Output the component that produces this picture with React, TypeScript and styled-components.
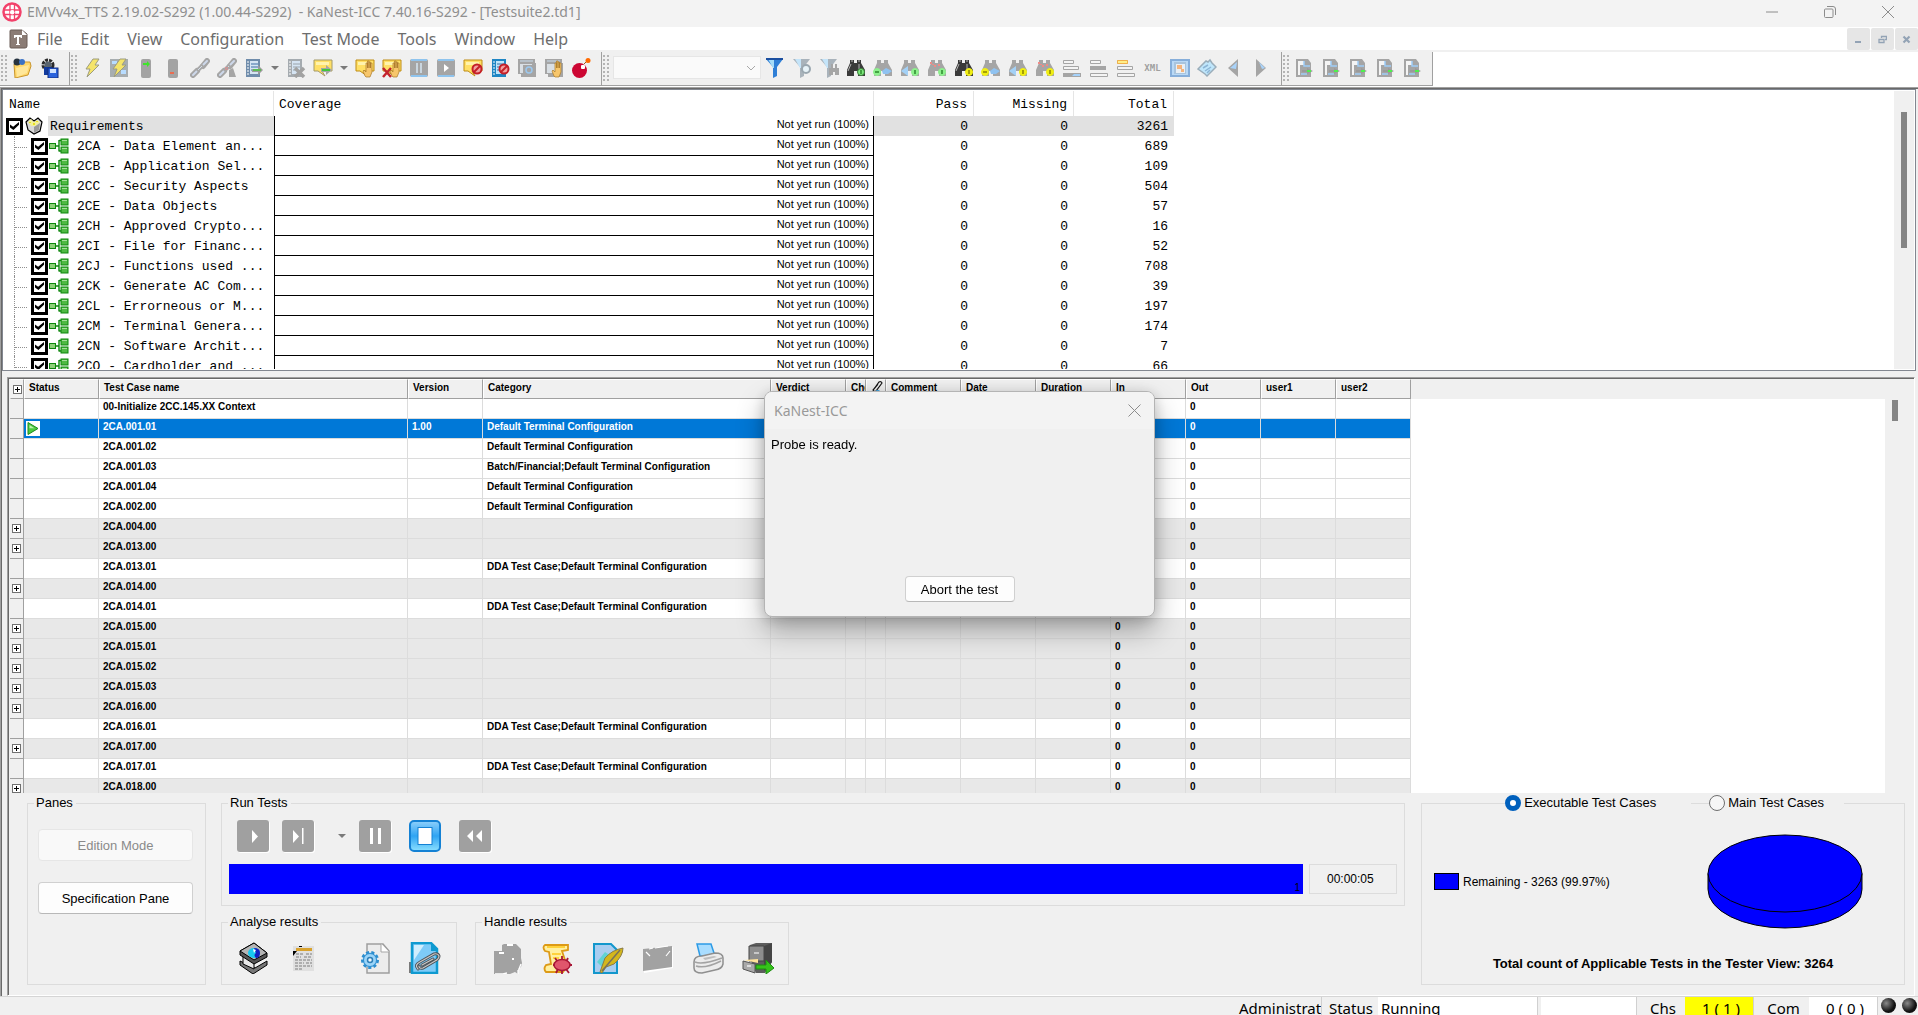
import React from "react";
import styled, { createGlobalStyle } from "styled-components";

const UI = `"Noto Sans", "Open Sans", sans-serif`;
const SANS = `"Liberation Sans", Arial, sans-serif`;
const MONO = `"Liberation Mono", "Courier New", monospace`;

const GlobalStyle = createGlobalStyle`
  * { box-sizing: border-box; }
  html, body { margin: 0; padding: 0; }
  body { background: #f0f0f0; color: #000; font-family: ${SANS}; font-size: 13px; overflow: hidden; }
  button, input, select { font: inherit; color: inherit; margin: 0; }
`;

/* ---------- window frame ---------- */
const Window = styled.div`
  display: flex;
  flex-direction: column;
  height: 100vh;
  min-height: 700px;
`;
const TitleBar = styled.header`
  display: flex;
  align-items: center;
  height: 27px;
  background: #f3f3f3;
  color: #8f8f8f;
  font: 14px/24px ${UI};
  padding: 0 1px 3px 2px;
  gap: 5px;
`;
const Title = styled.h1`
  flex: 1;
  margin: 0;
  font: inherit;
  white-space: pre;
`;
const CaptionButtons = styled.div`
  display: flex;
`;
const CaptionButton = styled.button`
  display: grid;
  place-items: center;
  width: 58px;
  height: 24px;
  padding: 0;
  border: 0;
  background: none;
`;
const MenuBar = styled.nav`
  display: flex;
  align-items: center;
  height: 25px;
  background: #fff;
  border-bottom: 2px solid #f0f0f0;
  padding-left: 9px;
`;
const MenuList = styled.div`
  display: flex;
  flex: 1;
`;
const MenuItem = styled.button`
  border: 0;
  background: none;
  padding: 0 9px;
  color: #6d6d6d;
  font: 16px/22px ${UI};
`;
const MdiButton = styled.button`
  display: grid;
  place-items: center;
  width: 23px;
  height: 22px;
  margin-left: 1px;
  padding: 2px 0 0;
  border: 0;
  border-radius: 2px;
  background: #e6e6e6;
`;

/* ---------- toolbars ---------- */
const ToolbarRow = styled.div`
  display: flex;
  height: 35px;
  background: #fff;
`;
const Toolbar = styled.div`
  display: flex;
  align-items: center;
  height: 34px;
  background: #f0f0f0;
  border-bottom: 1px solid #a0a0a0;
  border-right: 1px solid #a0a0a0;
  padding: 0 7px 2px 0;
`;
const Grip = styled.span`
  width: 8px;
  height: 28px;
  background-image: radial-gradient(circle, #b4b4b4 1px, transparent 1px);
  background-size: 4px 4px;
`;
const ToolButton = styled.button`
  display: grid;
  place-items: center;
  width: 27px;
  height: 28px;
  padding: 0;
  border: 0;
  background: none;
  font: bold 9px/12px "DejaVu Sans Mono", monospace;
  color: #a0a0a0;
`;
const DropArrow = styled.button`
  width: 15px;
  height: 28px;
  padding: 0;
  border: 0;
  background: none;
  display: grid;
  place-items: center;
`;
const FilterSelect = styled.select`
  appearance: none;
  width: 148px;
  height: 23px;
  border: 1px solid #e6e6e6;
  background: #fafafa;
  opacity: 1;
`;
const SelectWrap = styled.span`
  display: grid;
  align-items: center;
  margin-left: 3px;
  & > * { grid-area: 1 / 1; }
  & > svg { justify-self: end; margin-right: 4px; pointer-events: none; }
`;

/* ---------- requirements pane ---------- */
const Workspace = styled.main`
  flex: 1;
  min-height: 0;
  display: flex;
  flex-direction: column;
  border-top: 1px solid #a0a0a0;
  border-left: 1px solid #a0a0a0;
`;
const WorkspaceInner = styled.div`
  flex: 1;
  min-height: 0;
  display: flex;
  flex-direction: column;
  border-top: 1px solid #696969;
  border-left: 1px solid #696969;
`;
const RequirementsPane = styled.section`
  display: flex;
  flex: 0 0 282px;
  min-height: 0;
  margin-right: 2px;
  border: 1px solid #828790;
  background: #fff;
  padding: 1px;
`;
const ScrollClip = styled.div`
  flex: 1;
  min-width: 0;
  min-height: 0;
  overflow: hidden;
`;
const ScrollTrack = styled.div<{ $w: number }>`
  flex: none;
  width: ${(p) => p.$w}px;
  background: #f0f0f0;
  padding: 21px 0 0 7px;
`;
const ScrollThumb = styled.div<{ $h: number }>`
  width: 6px;
  height: ${(p) => p.$h}px;
  background: #858585;
`;
const ReqTable = styled.table`
  table-layout: fixed;
  width: 1170px;
  border-collapse: separate;
  border-spacing: 0;
  font: 13px/18px ${MONO};
`;
const ReqTh = styled.th<{ $right?: boolean }>`
  height: 25px;
  padding: 2px 6px 0 5px;
  font-weight: normal;
  text-align: ${(p) => (p.$right ? "right" : "left")};
  border-right: 1px solid #e5e5e5;
`;
const NameCell = styled.td`
  height: 20px;
  padding: 0;
`;
const NameFlex = styled.label<{ $root?: boolean }>`
  display: flex;
  align-items: center;
  height: 20px;
  white-space: pre;
  padding-left: ${(p) => (p.$root ? 2 : 10)}px;
`;
const NameText = styled.span<{ $root?: boolean }>`
  flex: 1;
  overflow: hidden;
  margin-left: ${(p) => (p.$root ? 4 : 6)}px;
  padding: 2px 0 0 2px;
  background: ${(p) => (p.$root ? "#e1e1e1" : "transparent")};
`;
const Branch = styled.span`
  align-self: stretch;
  width: 17px;
  border-left: 1px dotted #909090;
  &::before {
    content: "";
    display: block;
    width: 12px;
    height: 11px;
    border-bottom: 1px dotted #909090;
  }
`;
const TreeCheck = styled.input`
  appearance: none;
  display: grid;
  place-items: center;
  width: 17px;
  height: 17px;
  margin: 0 1px 0 0;
  border: 3px solid #000;
  background: #fff;
  &:checked::before {
    content: "";
    width: 9px;
    height: 8px;
    background: #000;
    clip-path: polygon(0 30%, 35% 58%, 100% 0, 100% 35%, 38% 100%, 0 70%);
  }
`;
const CoverageCell = styled.td`
  padding: 0 4px 3px 0;
  border-left: 1px solid #000;
  border-right: 1px solid #000;
  border-bottom: 1px solid #000;
  text-align: right;
  font: 11px/16px ${SANS};
`;
const NumCell = styled.td<{ $root?: boolean }>`
  padding: 2px 6px 0 0;
  text-align: right;
  background: ${(p) => (p.$root ? "#e1e1e1" : "transparent")};
`;

/* ---------- test-case grid ---------- */
const TestPane = styled.section`
  flex: 1;
  min-height: 0;
  display: flex;
  flex-direction: column;
  margin: 6px 3px 0 5px;
  border: 1px solid #a0a0a0;
  border-right-color: #fff;
  border-bottom-color: #fff;
`;
const TestPaneInner = styled.div`
  flex: 1;
  min-height: 0;
  display: flex;
  flex-direction: column;
  border-top: 1px solid #696969;
  border-left: 1px solid #696969;
`;
const GridArea = styled.div`
  flex: 1;
  min-height: 0;
  display: flex;
  padding-left: 1px;
`;
const GridTable = styled.table`
  table-layout: fixed;
  width: 100%;
  border-collapse: separate;
  border-spacing: 0;
  background: #fff;
  font: bold 10px/16px ${SANS};
`;
const GridTh = styled.th`
  height: 20px;
  padding: 0 0 1px 4px;
  overflow: hidden;
  white-space: nowrap;
  vertical-align: top;
  text-align: left;
  background: #f0f0f0;
  border: 1px solid #a0a0a0;
  border-top-color: #fff;
  border-left-color: #fff;
  & > svg { display: block; }
`;
const FillerTh = styled.th`
  background: #f0f0f0;
`;
const ExpandCell = styled.td`
  height: 20px;
  padding: 0;
  background: #f0f0f0;
  border-right: 1px solid #a0a0a0;
  border-bottom: 1px solid #a0a0a0;
`;
const ExpandButton = styled.button`
  display: grid;
  place-items: center;
  width: 9px;
  height: 9px;
  margin: 0 auto;
  padding: 0;
  border: 1px solid #707070;
  background: #fff;
`;
const HeadExpand = styled(GridTh)`
  padding: 0;
  vertical-align: middle;
  border-left-color: #f0f0f0;
`;
const Td = styled.td<{ $tone: Tone }>`
  height: 20px;
  padding: 0 0 0 4px;
  vertical-align: top;
  white-space: nowrap;
  overflow: hidden;
  border-right: 1px solid #dcdcdc;
  border-bottom: 1px solid #dcdcdc;
  background: ${(p) => (p.$tone === "sel" ? "#0078d7" : p.$tone === "gray" ? "#e8e8e8" : "#fff")};
  color: ${(p) => (p.$tone === "sel" ? "#fff" : "#000")};
`;
const StatusIcon = styled.span`
  display: block;
  width: 14px;
  height: 15px;
  margin: 2px 0 0 -2px;
  background: #fff;
`;

/* ---------- bottom panels ---------- */
const Controls = styled.div`
  display: flex;
  gap: 15px;
  padding: 2px 9px 10px 18px;
`;
const Center = styled.div`
  flex: 1;
  display: flex;
  flex-direction: column;
  gap: 8px;
  margin-right: 1px;
`;
const GroupRow = styled.div`
  display: flex;
  gap: 18px;
`;
const Group = styled.fieldset<{ $w?: number }>`
  margin: 0;
  min-width: 0;
  border: 1px solid #dcdcdc;
  width: ${(p) => (p.$w ? `${p.$w}px` : "auto")};
  padding: 0;
`;
const GroupBody = styled.div<{ $pad: string }>`
  padding: ${(p) => p.$pad};
`;
const Legend = styled.legend`
  margin-left: 6px;
  padding: 0 3px 0 2px;
  line-height: 16px;
`;
const PaneButtons = styled.div`
  display: grid;
  gap: 21px;
`;
const PushButton = styled.button`
  height: 32px;
  border: 1px solid #d0d0d0;
  border-bottom-color: #b8b8b8;
  border-radius: 4px;
  background: #fdfdfd;
  padding: 0 12px;
  &:disabled { background: #f9f9f9; color: #8a8a8a; border-color: #e6e6e6; }
`;
const Transport = styled.div`
  display: flex;
  align-items: center;
  gap: 10px;
  padding-left: 8px;
`;
const Cluster = styled.div<{ $gap: number }>`
  display: flex;
  align-items: center;
  gap: ${(p) => p.$gap}px;
`;
const PlainIconButton = styled.button`
  display: grid;
  place-items: center;
  width: 32px;
  height: 32px;
  padding: 0;
  border: 0;
  background: none;
`;
const ProgressRow = styled.div`
  display: flex;
  gap: 6px;
  margin-top: 12px;
`;
const Progress = styled.div`
  flex: 1;
  height: 30px;
  background: #00f;
  text-align: right;
  font-size: 10px;
  line-height: 12px;
  padding: 18px 3px 0 0;
`;
const Timer = styled.output`
  width: 88px;
  height: 30px;
  border: 1px solid #dcdcdc;
  font-size: 12px;
  line-height: 28px;
  padding-left: 17px;
`;
const IconStrip = styled.div`
  display: flex;
  gap: 18px;
`;
const IconGap = styled.span`
  width: 3px;
`;
const ModeLegend = styled.legend`
  display: flex;
  align-items: center;
  margin-left: auto;
  margin-right: 60px;
  padding: 0;
  line-height: 16px;
`;
const ModeRule = styled.span`
  width: 18px;
  height: 1px;
  background: #dcdcdc;
`;
const ModeLabel = styled.label<{ $pad: number }>`
  display: flex;
  align-items: center;
  gap: 3px;
  padding-right: ${(p) => p.$pad}px;
`;
const Radio = styled.input`
  appearance: none;
  width: 16px;
  height: 16px;
  border: 1px solid #6e6e6e;
  border-radius: 50%;
  background: #f6f6f6;
  &:checked { border: 5px solid #0060bd; background: #fff; }
`;
const ChartRow = styled.div`
  display: flex;
  align-items: center;
  justify-content: space-between;
  padding: 0 41px 0 12px;
  font-size: 12px;
`;
const LegendEntry = styled.span`
  display: flex;
  align-items: center;
  gap: 4px;
`;
const Swatch = styled.span`
  width: 25px;
  height: 17px;
  background: #00f;
  border: 1px solid #000;
`;
const TotalLine = styled.p`
  margin: 26px 0 0;
  text-align: center;
  font: bold 13px/18px ${SANS};
`;

/* ---------- status bar ---------- */
const StatusBar = styled.footer`
  display: flex;
  justify-content: flex-end;
  height: 19px;
  overflow: hidden;
  border-top: 1px solid #d5d5d5;
  padding: 0 1px 0 0;
  font: 15px/22px ${UI};
`;
const StatusCell = styled.span<{ $w: number; $bg?: string; $sep?: boolean; $center?: boolean }>`
  flex: none;
  width: ${(p) => p.$w}px;
  overflow: hidden;
  white-space: pre;
  padding-left: ${(p) => (p.$center ? 4 : 3)}px;
  text-align: ${(p) => (p.$center ? "center" : "left")};
  background: ${(p) => p.$bg ?? "transparent"};
  border-right: ${(p) => (p.$sep ? "1px solid #d0d0d0" : "0")};
`;
const Lamps = styled.span`
  display: flex;
  gap: 6px;
  padding: 1px 0 0 3px;
`;
const Lamp = styled.span`
  width: 15px;
  height: 15px;
  border-radius: 50%;
  background: radial-gradient(circle at 35% 35%, #8a8a8a, #111 60%);
`;

/* ---------- dialog ---------- */
const Overlay = styled.div`
  position: fixed;
  inset: 0;
  display: grid;
  place-items: center;
  padding: 0 0 7px 1px;
  pointer-events: none;
`;
const Dialog = styled.div`
  display: flex;
  flex-direction: column;
  width: 391px;
  height: 226px;
  border: 1px solid #b4b4b4;
  border-radius: 8px;
  background: #f0f0f0;
  overflow: hidden;
  box-shadow: 0 14px 28px rgba(0, 0, 0, 0.3), 0 2px 14px rgba(0, 0, 0, 0.16);
  pointer-events: auto;
`;
const DialogTitle = styled.div`
  display: flex;
  align-items: center;
  justify-content: space-between;
  height: 37px;
  background: #f3f3f3;
  color: #999;
  font: 14px/20px ${UI};
  padding: 0 5px 0 9px;
`;
const DialogClose = styled(CaptionButton)`
  width: 30px;
`;
const DialogText = styled.p`
  flex: 1;
  margin: 0;
  padding: 7px 6px;
  line-height: 18px;
`;
const DialogActions = styled.div`
  display: flex;
  justify-content: center;
  padding-bottom: 14px;
`;
const AbortButton = styled(PushButton)`
  width: 110px;
  height: 26px;
  padding: 0;
`;

/* ---------- icons ---------- */
type Kids = { children?: React.ReactNode };
const Svg = ({ s = 20, w, h, box, children }: Kids & { s?: number; w?: number; h?: number; box?: string }) => (
  <svg width={w ?? s} height={h ?? s} viewBox={box ?? `0 0 ${w ?? s} ${h ?? s}`} fill="none" aria-hidden="true">
    {children}
  </svg>
);
const G = "#a5a5a5";

const FolderIcon = () => (
  <Svg>
    <path d="M2 6h6l2-2h8l1 4-3 9-13 3z" fill="#ffd76a" stroke="#c9962e" />
    <path d="M4 10l13-3-2 8-10 4z" fill="#ffe79a" />
    <circle cx="5" cy="4" r="3.5" fill="#26333f" />
    <circle cx="10" cy="4" r="3" fill="#3b72c4" />
  </Svg>
);
const GearSaveIcon = () => (
  <Svg>
    <circle cx="9" cy="7" r="5" stroke="#2a2a2a" strokeWidth="3" strokeDasharray="3 1" />
    <circle cx="9" cy="7" r="3.5" fill="#59646e" />
    <rect x="5" y="9" width="8" height="8" fill="#123a9c" />
    <rect x="9" y="10" width="10" height="10" fill="#2b63dd" stroke="#102c80" />
    <rect x="11" y="11" width="6" height="4" fill="#cfe2ff" />
  </Svg>
);
const BoltIcon = ({ framed }: { framed?: boolean }) => (
  <Svg>
    {framed && <path d="M1 1h18v18H1z" fill="#a7adb0" />}
    {framed && <path d="M3 3h5v3H3zM12 12h5v4h-5z" fill="#b8dcff" />}
    <path d="M11 1h6l-4 6h4L5 19l3-8H4z" fill="#f5e469" stroke="#9c9c80" />
  </Svg>
);
const ProbeIcon = ({ on }: { on?: boolean }) => (
  <Svg>
    <rect x="5" y="1" width="10" height="19" rx="2" fill="#a3a3a3" />
    {on ? <path d="M7 5h4V3l3 3-3 3V7H7z" fill="#3fe52a" /> : <path d="M7 15h4" stroke="#ff5a36" strokeWidth="1.500" />}
  </Svg>
);
const LinkIcon = ({ bad }: { bad?: boolean }) => (
  <Svg>
    <path d="M3 17l4-4M13 8l4-5" stroke="#a5a5a5" strokeWidth="6" strokeLinecap="round" />
    <path d="M3 17l4-4M13 7l4-4" stroke="#cdd8ea" strokeWidth="2" strokeLinecap="round" />
    <path d="M7 13l6-6" stroke="#a8a8a8" strokeWidth="4" />
    <path d="M8 12l4-4" stroke="#d3ddea" />
    {bad && <path d="M8 9l3 3m0-3l-3 3" stroke="#e88a8c" />}
    {bad && <path d="M12 12l4-2 3 9h-7z" fill="#a5a5a5" />}
  </Svg>
);
const NotebookIcon = ({ kind }: { kind: "run" | "off" | "stop" }) => (
  <Svg>
    <rect x="2" y="1" width="14" height="18" fill={kind === "off" ? "#a5abb0" : kind === "stop" ? "#1f86c4" : "#6f8cab"} />
    <path d="M6 3h8v13H6z" fill={kind === "stop" ? "#bfe6fb" : "#d5e4f3"} />
    <path d="M3 4h2M3 7h2M3 10h2M3 13h2M3 16h2" stroke="#fff" />
    <path d="M7 6h7M7 9h7M7 12h5" stroke={kind === "off" ? "#9aa3aa" : "#3d6fa3"} />
    {kind === "run" && <path d="M8 11h6V7l5 5-5 5v-3H8z" fill="#9b9b9b" />}
    {kind === "run" && <path d="M9 12h8" stroke="#45c93c" strokeWidth="1.500" />}
    {kind === "off" && <path d="M9 10l9 9m0-9l-9 9" stroke="#a2a2a2" strokeWidth="3.500" />}
    {kind === "stop" && <Forbid />}
  </Svg>
);
const Forbid = () => (
  <g>
    <circle cx="14" cy="11" r="4.5" fill="#f3a0a0" stroke="#c41f28" strokeWidth="2" />
    <path d="M11 14l6-6" stroke="#c41f28" strokeWidth="2" />
  </g>
);
const Hand = () => (
  <path d="M10 18l-2-5 1-1 2 2V5h1.500v5V3H14v7V4h1.500v6V5H17v9l-2 5h-4z" fill="#f7c66b" stroke="#a8782a" strokeWidth=".7" />
);
const NoteIcon = ({ kind }: { kind: "go" | "hand" | "delhand" | "stop" }) => (
  <Svg>
    <path d="M1 2h18v11H9l3 5-7-5H1z" fill="#ffe066" stroke={kind === "go" ? "#a49a68" : "#bf8c14"} />
    <path d="M3 4h13v3H3z" fill="#fff3ad" />
    {kind === "go" && <path d="M8 10h5V7l6 5-6 5v-3H8z" fill="#a5a5a5" />}
    {kind === "go" && <path d="M9 12h8" stroke="#3fc83a" strokeWidth="2" />}
    {(kind === "hand" || kind === "delhand") && <Hand />}
    {kind === "delhand" && <path d="M1 10l8 9M9 10l-8 9" stroke="#c3232d" strokeWidth="2.500" />}
    {kind === "stop" && <Forbid />}
  </Svg>
);
const BlueKeyIcon = ({ kind }: { kind: "pause" | "play" }) => (
  <Svg>
    <rect x="1" y="1" width="18" height="18" rx="2" fill="#a5a5a5" />
    <path d="M2 2h16M2 18h16" stroke="#8fc4ee" strokeWidth="2" />
    {kind === "pause" ? <path d="M8 5v10M12 5v10" stroke="#d6e6f2" strokeWidth="1.500" /> : <path d="M8 6l5 4-5 4z" fill="#fff" />}
  </Svg>
);
const WindowIcon = ({ hand }: { hand?: boolean }) => (
  <Svg>
    <path d="M1 1h17v4h1v14H4v-3H1z" fill="#a5a5a5" />
    <path d="M3 6h12v9H3z" fill="#d9dfe4" />
    <path d="M3 3h13" stroke="#c9dcec" />
    {hand ? (
      <Hand />
    ) : (
      <g>
        <path d="M6 7h13v12H6z" fill="#a5a5a5" />
        <circle cx="12" cy="12" r="3" stroke="#9cc8ee" strokeWidth="1.500" />
      </g>
    )}
  </Svg>
);
const BombIcon = () => (
  <Svg>
    <path d="M13 6l4-4" stroke="#9c5a1c" />
    <circle cx="17" cy="2.500" r="2.500" fill="#ff6a00" />
    <ellipse cx="8.500" cy="12.500" rx="7.500" ry="7.500" fill="#cc0633" />
    <rect x="10" y="7" width="4" height="4" rx="1" fill="#fff" />
  </Svg>
);
const FunnelIcon = ({ kind }: { kind: "on" | "clock" | "find" }) => {
  const on = kind === "on";
  return (
    <Svg>
      <path d="M1 1h17L12 9v9l-4 2V9z" fill={on ? "#2f7fd6" : "#a9b3bb"} />
      <path d="M3 1h6v9l-1 0z" fill={on ? "#a5dcf8" : "#c4e4f9"} />
      {on && <path d="M1 1h17" stroke="#1b4fa0" strokeWidth="2" />}
      {kind === "clock" && <circle cx="14" cy="11" r="4" fill="#e6f2f8" stroke="#9aa7b0" strokeWidth="2" />}
      {kind === "find" && <path d="M10 10h2V6h2v4h2V6h2v4h2v7h-4v-3h-2v3h-4z" fill="#a5a5a5" />}
    </Svg>
  );
};
type BinoKind = "find" | "next" | "prev" | "mark";
const BinocularIcon = ({ kind, hue }: { kind: BinoKind; hue: "green" | "yellow" }) => {
  const body = kind === "find" ? "#3a3a3a" : G;
  const c = hue === "green" ? (kind === "find" ? "#7be87b" : "#8df08d") : "#f0ee14";
  const cx = kind === "next" ? 4 : 15;
  return (
    <Svg>
      <path d="M4 2h4v3h3V2h4v3l4 7v6h-7v-5H8v5H1v-6l3-7z" fill={body} />
      {kind === "find" && <path d="M5 6l-3 7M13 6v5M5 3h2M12 3h2" stroke="#b5b5b5" />}
      {kind === "next" && <path d="M9 13l4-3 6 3-4 3h-5z" fill="#8fc2f0" />}
      {kind === "prev" && <path d="M1 13l7-5v10z" fill="#a3d1f7" />}
      {kind === "mark" && <path d="M3 4h2v2H3zM7 7h2v2H7zM5 6h2v1H5zM11 6h2v2h-2z" fill="#f08a86" />}
      <circle cx={cx} cy="14" r="3.500" fill={c} stroke={kind === "find" && hue === "green" ? "#3a7a3a" : c} />
      <path d={kind === "next" ? "M2 14h4" : "M15 12v4"} stroke={hue === "green" ? "#2c8a2c" : "#8b8400"} strokeWidth="1.500" />
    </Svg>
  );
};
const BarsIcon = ({ hot }: { hot: number }) => (
  <Svg>
    <path d="M1.500 2.500h10v3h-10zM1.500 8.500h15v3h-15zM1.500 15.500h17v3h-17z" fill="#f4f4f4" stroke={G} />
    {hot === 0 && <path d="M1.500 2.500h10v3h-10z" fill="#ffef8a" stroke="#f0b04a" />}
    {hot === 1 && <path d="M1 8h16v4H1z" fill={G} />}
    {hot === 2 && <path d="M1 15h18v4H1z" fill={G} />}
    {hot === 2 && <path d="M12 16h6v2h-8z" fill="#a5d2fb" />}
  </Svg>
);
const FrameIcon = () => (
  <Svg>
    <rect x="1" y="2" width="18" height="16" fill="#b9d9f6" stroke="#86aeda" strokeWidth="2" />
    <rect x="4" y="4" width="12" height="12" fill="#a9c4dd" />
    <rect x="6" y="6" width="9" height="9" fill="#e9eff5" />
    <path d="M7 7h5v4H7z" fill="#f4b57e" />
    <path d="M11 11h3v3h-3z" fill="#f4b57e" />
  </Svg>
);
const TagIcon = () => (
  <Svg>
    <path d="M1 11l8-8 2 1 2-2 2 3 4 4-9 9-2-2z" fill="#bfe6fb" stroke="#9aadba" strokeWidth="1.500" />
    <path d="M6 10l5-3M8 13l6-4M10 15l3-3" stroke="#8cb5d6" strokeWidth="1.500" />
  </Svg>
);
const TriangleIcon = ({ right }: { right?: boolean }) => (
  <Svg>
    {right ? (
      <g>
        <path d="M5 1l10 9L5 19z" fill={G} />
        <path d="M8 4l6 6-3 1z" fill="#a9d3fa" />
      </g>
    ) : (
      <g>
        <path d="M14 1L4 10l10 9z" fill={G} />
        <path d="M13 4l-7 6 6 1z" fill="#a9d3fa" />
      </g>
    )}
  </Svg>
);
const ReportIcon = () => (
  <Svg>
    <path d="M2 1h12l3 4v14H2z" fill="#a5a5a5" />
    <path d="M4 3v14h2V7h4V3z" fill="#f4f4f4" />
    <path d="M10 3v5h6M7 16h6" stroke="#9fcdf7" strokeWidth="1.500" />
    <path d="M8 12h5v-2l6 3-6 3v-2H8z" fill="#9a9a9a" />
    <path d="M13 13h4" stroke="#4df04d" strokeWidth="2" />
  </Svg>
);
const ArrowDown = () => (
  <Svg w={10} h={6}>
    <path d="M1 1h8L5 5z" fill="#7a7a7a" />
  </Svg>
);
const LogoIcon = () => (
  <Svg s={20}>
    <circle cx="10" cy="10" r="8.500" fill="#fff" stroke="#f2416a" strokeWidth="2.500" />
    <path d="M8 2v16M12.500 2v16M2 8h16M2 12.500h16" stroke="#f2416a" strokeWidth="1.300" />
    <circle cx="10.250" cy="10.250" r="2.200" fill="#fff" />
  </Svg>
);
const DocTIcon = () => (
  <Svg w={19} h={20}>
    <path d="M2 1h11l5 4v12q0 2-2 2H2q-1 0-1-1V2q0-1 1-1z" fill="#8b7c75" stroke="#6b5d57" />
    <path d="M13 1l5 5h-5z" fill="#fff" />
    <path d="M5 6h8v3h-1l-1-1h-1v7h1v1H7v-1h1V8H7L6 9H5z" fill="#fff" />
  </Svg>
);
const RootIcon = () => (
  <Svg>
    <path d="M2 6l4-4 4 3 4-3 4 4-2 9-6 3-6-4z" fill="#d8d8d8" stroke="#000" strokeWidth="1.200" />
    <path d="M4 6l3-3 3 3 3-2 3 2-4 4H7z" fill="#f1ef9a" />
    <path d="M5 6h2v1H5zM9 7h2v2H9zM12 5h2v1h-2z" fill="#e8e020" />
    <path d="M10 11l6-4-1 7-5 3z" fill="#9a9a9a" />
  </Svg>
);
const NodeIcon = () => (
  <Svg w={20} h={16}>
    <path d="M6 8h4M10 2.500h3M10 13h3M10 2v11.500" stroke="#0b870b" strokeWidth="1.400" />
    <rect x="0.500" y="5.500" width="6" height="5" fill="#8fd07a" stroke="#0b870b" />
    <rect x="12" y="1" width="7" height="6" fill="#4fb944" stroke="#0b870b" />
    <rect x="12" y="9" width="7" height="6" fill="#4fb944" stroke="#0b870b" />
    <path d="M13 2.500h5M13 10.500h5" stroke="#a5dd9b" />
  </Svg>
);
const PlusIcon = () => (
  <Svg s={7}>
    <path d="M1 3.500h5M3.500 1v5" stroke="#000" />
  </Svg>
);
const ClipHeadIcon = () => (
  <Svg w={13} h={14}>
    <path d="M3 9l5-7q2-1 3 1l-6 8q-2 1-3-1l5-6" stroke="#111" strokeWidth="1.200" />
    <path d="M5 10h4l-3 3z" fill="#48a7e0" />
  </Svg>
);
const PlayGreen = () => (
  <Svg w={14} h={15}>
    <path d="M2 1.500L12 7.500 2 13.500z" fill="#4ccb3f" stroke="#1d8a1d" />
    <path d="M3.500 4l5 3.200-5 0z" fill="#bdf0ae" />
  </Svg>
);
const KeyIcon = ({ kind }: { kind: "play" | "step" | "pause" | "back" }) => (
  <Svg s={33} w={33} h={33}>
    <rect x="1" y="1" width="32" height="32" rx="3" fill="#fff" />
    <rect x="0" y="0" width="32" height="32" rx="3" fill="#a0a0a0" />
    {kind === "play" && <path d="M15 10l6 6.500-6 6.500z" fill="#fff" />}
    {kind === "step" && <path d="M11 10l6 6.500-6 6.500zM20 8h1.500v16H20z" fill="#fff" />}
    {kind === "pause" && <path d="M11 8h3v16h-3zM19 8h3v16h-3z" fill="#fff" />}
    {kind === "back" && <path d="M14 10l-6 6 6 6zM23 10l-6 6 6 6z" fill="#fff" />}
  </Svg>
);
const StopIcon = () => (
  <Svg s={32}>
    <defs>
      <linearGradient id="stopFill" x1="0" y1="0" x2="0" y2="1">
        <stop offset="0" stopColor="#8fd0fb" />
        <stop offset=".5" stopColor="#2fa4f3" />
        <stop offset="1" stopColor="#8be0ff" />
      </linearGradient>
    </defs>
    <rect x="1" y="1" width="30" height="30" rx="4" fill="url(#stopFill)" stroke="#1481d4" strokeWidth="2" />
    <rect x="9" y="7.500" width="14" height="17" fill="#fff" stroke="#1481d4" />
  </Svg>
);
const AnalyseIcon = () => (
  <Svg s={32}>
    <path d="M2 19l15 7 12-7v4l-14 9L2 23z" fill="#777" stroke="#000" />
    <path d="M5 12v10l11 5V15z" fill="#e9e9e9" stroke="#000" />
    <path d="M2 9L16 1l13 10v4l-13 7L2 13z" fill="#555" stroke="#000" />
    <path d="M2 9L16 1l13 10-13 7z" fill="#b5b5b5" stroke="#000" />
    <ellipse cx="16" cy="11" rx="6" ry="5" fill="#18c8f0" />
    <path d="M16 6q6 0 6 5t-4 5q-3-3 0-5z" fill="#1420c0" />
    <path d="M15 7l3 1-2 3z" fill="#fff" />
  </Svg>
);
const LogIcon = () => (
  <Svg s={32}>
    <path d="M5 4h21v25H5z" fill="#e0e0e0" />
    <path d="M8 6h16v3H8z" fill="#d8a22e" />
    <path d="M5 9h4l-4 5z" fill="#000" />
    <path d="M11 4h3v1h-3z" fill="#000" />
    <path d="M8 12h7M18 12h6M8 15h5M16 15h8M7 18h17M7 21h9M18 21h6M7 24h17M7 27h8" stroke="#7c7c7c" strokeDasharray="3 1" />
  </Svg>
);
const SettingsDocIcon = () => (
  <Svg s={32}>
    <path d="M8 2h16l6 7v22H8z" fill="#ececec" stroke="#9e9e9e" strokeWidth="1.500" />
    <path d="M22 2v8h8" fill="#fff" stroke="#a5a5a5" />
    <circle cx="11" cy="18" r="7.500" fill="#8ccaf4" stroke="#2d8ecf" strokeWidth="3" strokeDasharray="3 2.200" />
    <circle cx="11" cy="18" r="6.500" fill="#9bd4f8" stroke="#2d8ecf" />
    <circle cx="11" cy="18" r="2.500" fill="#eef7fd" stroke="#2d7fb8" strokeWidth="1.500" />
  </Svg>
);
const AttachIcon = () => (
  <Svg s={32}>
    <path d="M0 20h4v11H0z" fill="#7a7a7a" />
    <path d="M3 1h19l6 6v24H3z" fill="#7ecbf8" stroke="#0f9ad0" strokeWidth="2.500" />
    <path d="M22 1v8h7z" fill="#0f9ad0" />
    <path d="M5 3h10L5 18z" fill="#d0eefd" />
    <path d="M13 23l11-6M9 27q-4-4 2-7l14-8q4-1 5 2 0 3-4 5l-12 7q-4 1-4-2" stroke="#4c5156" strokeWidth="3" strokeLinecap="round" />
    <path d="M13 23l11-6M9 27q-4-4 2-7l14-8q4-1 5 2 0 3-4 5l-12 7q-4 1-4-2" stroke="#c8c8c8" strokeWidth="1.200" strokeLinecap="round" />
  </Svg>
);
const CopyGrayIcon = () => (
  <Svg s={32}>
    <path d="M2 9h8V3l2-1h12l5 5v9l1 5-1 4-3 2v5l-3-2-5 2H2z" fill="#a2a2a2" />
    <path d="M15 3h6M7 11h5" stroke="#fff" strokeWidth="2" />
    <path d="M20 16h2v2h-2z" fill="#fff" />
    <path d="M3 32h8l4-1M29 22l-2 5M26 28v4" stroke="#fff" strokeWidth="1.300" />
  </Svg>
);
const ScrollBugIcon = () => (
  <Svg s={32}>
    <path d="M3 3q-3 2 0 6l4 1 2 12-5 1q-3 4 0 7h17l4-6-5-15 6-1V3z" fill="#fff0a0" stroke="#dd9a16" strokeWidth="1.800" />
    <path d="M5 5h18M10 12h9M11 16h6" stroke="#ffd23a" strokeWidth="2" />
    <path d="M13 16l3 4M20 14v6M26 16l-2 4M11 23h19M14 31l2-4M20 32v-4M27 31l-3-4" stroke="#a81636" strokeWidth="1.800" />
    <ellipse cx="20" cy="23" rx="8" ry="5.500" fill="#e0566c" stroke="#a81636" strokeWidth="1.500" />
  </Svg>
);
const EditDocIcon = () => (
  <Svg s={32}>
    <path d="M2 2h17l6 6v23H2z" fill="#a9cdf0" stroke="#1397cc" strokeWidth="2" />
    <path d="M5 20l8-10 6 4-8 12z" fill="#62d3d3" />
    <path d="M8 30l5-14Q20 8 31 6q0 8-9 16l-8 3-4 6z" fill="#d4b71c" stroke="#8a7c48" />
    <path d="M10 29L28 8" stroke="#77715e" strokeWidth="1.500" />
  </Svg>
);
const EnvelopeGrayIcon = () => (
  <Svg s={32}>
    <path d="M2 9l29-4v21L2 31z" fill="#fff" />
    <path d="M1 7l29-3v21L1 29z" fill="#a2a2a2" />
    <path d="M4 10l4 4M28 9l-4 5M7 7l4-1M13 6l13-2" stroke="#fff" strokeWidth="1.200" />
  </Svg>
);
const PrinterIcon = () => (
  <Svg s={32}>
    <path d="M5 2h14l4 12H8z" fill="#a9ddff" stroke="#2d9be6" strokeWidth="1.500" />
    <path d="M2 20q0-6 8-6l13-3q8 0 8 5v6q-1 5-8 6l-13 3q-8 0-8-5z" fill="#ececec" stroke="#8f8f8f" strokeWidth="1.500" />
    <path d="M3 20q8 3 27-4M4 24q9 3 25-5" stroke="#a3a3a3" strokeWidth="1.500" />
    <path d="M11 16l11-2 3 1-12 3z" fill="#bdbdbd" />
  </Svg>
);
const ArchiveIcon = () => (
  <Svg s={32}>
    <path d="M8 3l6-2h16v19l-7 11h-9L8 17z" fill="#5d5d5d" />
    <path d="M7 4h15v15H7z" fill="#8d8d8d" stroke="#444" />
    <path d="M22 4l8-3v19l-8 9z" fill="#454545" />
    <path d="M12 11h5" stroke="#ddd" strokeWidth="1.500" />
    <path d="M2 18l14-1v4z" fill="#ffe39a" />
    <path d="M1 19l12 3v9L1 27z" fill="#a9a9a9" stroke="#555" />
    <path d="M5 24h4" stroke="#eee" strokeWidth="1.500" />
    <path d="M14 23h10v-5l8 8-8 6v-5H14z" fill="#35c31a" stroke="#1f8c10" />
  </Svg>
);
const PieChart = () => (
  <svg width="156" height="95" viewBox="0 0 156 95" role="img" aria-label="Remaining 99.97%">
    <path d="M1 39.500v16a77 38.500 0 0 0 154 0v-16z" fill="#00f" stroke="#000" />
    <ellipse cx="78" cy="39.500" rx="77" ry="38.500" fill="#00f" stroke="#000" />
  </svg>
);

/* ---------- data ---------- */
type Tone = "white" | "gray" | "sel";
const MENUS = ["File", "Edit", "View", "Configuration", "Test Mode", "Tools", "Window", "Help"];

const REQS: [string, number][] = [
  ["2CA - Data Element an...", 689],
  ["2CB - Application Sel...", 109],
  ["2CC - Security Aspects", 504],
  ["2CE - Data Objects", 57],
  ["2CH - Approved Crypto...", 16],
  ["2CI - File for Financ...", 52],
  ["2CJ - Functions used ...", 708],
  ["2CK - Generate AC Com...", 39],
  ["2CL - Errorneous or M...", 197],
  ["2CM - Terminal Genera...", 174],
  ["2CN - Software Archit...", 7],
  ["2CO - Cardholder and ...", 66],
];

const DEF = "Default Terminal Configuration";
const DDA = "DDA Test Case;Default Terminal Configuration";
type Case = { name: string; tone?: Tone; version?: string; cat?: string; expand?: boolean };
const parent = (name: string): Case => ({ name, tone: "gray", expand: true });
const CASES: Case[] = [
  { name: "00-Initialize 2CC.145.XX Context" },
  { name: "2CA.001.01", tone: "sel", version: "1.00", cat: DEF },
  { name: "2CA.001.02", cat: DEF },
  { name: "2CA.001.03", cat: "Batch/Financial;Default Terminal Configuration" },
  { name: "2CA.001.04", cat: DEF },
  { name: "2CA.002.00", cat: DEF },
  parent("2CA.004.00"),
  parent("2CA.013.00"),
  { name: "2CA.013.01", cat: DDA },
  parent("2CA.014.00"),
  { name: "2CA.014.01", cat: DDA },
  parent("2CA.015.00"),
  parent("2CA.015.01"),
  parent("2CA.015.02"),
  parent("2CA.015.03"),
  parent("2CA.016.00"),
  { name: "2CA.016.01", cat: DDA },
  parent("2CA.017.00"),
  { name: "2CA.017.01", cat: DDA },
  parent("2CA.018.00"),
];
const GRID_WIDTHS = [14, 75, 309, 75, 288, 75, 20, 20, 75, 75, 75, 75, 75, 75, 75];

const Tool = ({ label, children }: Kids & { label: string }) => (
  <ToolButton type="button" aria-label={label}>
    {children}
  </ToolButton>
);
const Drop = ({ label }: { label: string }) => (
  <DropArrow type="button" aria-label={label}>
    <ArrowDown />
  </DropArrow>
);

const BINOS: { kind: BinoKind; hue: "green" | "yellow" }[] = (["green", "yellow"] as const).flatMap((hue) =>
  (["find", "next", "prev", "mark"] as const).map((kind) => ({ kind, hue })),
);

const Toolbars = () => (
  <ToolbarRow>
    <Toolbar>
      <Grip />
      <Tool label="Open"><FolderIcon /></Tool>
      <Tool label="Save setup"><GearSaveIcon /></Tool>
    </Toolbar>
    <Toolbar>
      <Grip />
      <Tool label="Connect"><BoltIcon /></Tool>
      <Tool label="Connect all"><BoltIcon framed /></Tool>
      <Tool label="Probe on"><ProbeIcon on /></Tool>
      <Tool label="Probe off"><ProbeIcon /></Tool>
      <Tool label="Link"><LinkIcon /></Tool>
      <Tool label="Unlink"><LinkIcon bad /></Tool>
      <Tool label="Run script"><NotebookIcon kind="run" /></Tool>
      <Drop label="Script options" />
      <Tool label="Close script"><NotebookIcon kind="off" /></Tool>
      <Tool label="Go to note"><NoteIcon kind="go" /></Tool>
      <Drop label="Note options" />
      <Tool label="Breakpoint"><NoteIcon kind="hand" /></Tool>
      <Tool label="Remove breakpoint"><NoteIcon kind="delhand" /></Tool>
      <Tool label="Pause"><BlueKeyIcon kind="pause" /></Tool>
      <Tool label="Play"><BlueKeyIcon kind="play" /></Tool>
      <Tool label="Stop note"><NoteIcon kind="stop" /></Tool>
      <Tool label="Stop script"><NotebookIcon kind="stop" /></Tool>
      <Tool label="Mail window"><WindowIcon /></Tool>
      <Tool label="Hold window"><WindowIcon hand /></Tool>
      <Tool label="Abort"><BombIcon /></Tool>
    </Toolbar>
    <Toolbar>
      <Grip />
      <SelectWrap>
        <FilterSelect aria-label="Filter" disabled />
        <Svg w={12} h={8}><path d="M2 2l4 4 4-4" stroke="#a8a8a8" /></Svg>
      </SelectWrap>
      <Tool label="Filter"><FunnelIcon kind="on" /></Tool>
      <Tool label="Filter history"><FunnelIcon kind="clock" /></Tool>
      <Tool label="Filter search"><FunnelIcon kind="find" /></Tool>
      {BINOS.map((b) => (
        <Tool key={b.kind + b.hue} label={`${b.kind} ${b.hue}`}><BinocularIcon {...b} /></Tool>
      ))}
      <Tool label="Level 3"><BarsIcon hot={2} /></Tool>
      <Tool label="Level 2"><BarsIcon hot={1} /></Tool>
      <Tool label="Level 1"><BarsIcon hot={0} /></Tool>
      <Tool label="XML export">XML</Tool>
      <Tool label="Frame"><FrameIcon /></Tool>
      <Tool label="Tag"><TagIcon /></Tool>
      <Tool label="Previous"><TriangleIcon /></Tool>
      <Tool label="Next"><TriangleIcon right /></Tool>
    </Toolbar>
    <Toolbar>
      <Grip />
      {[1, 2, 3, 4, 5].map((n) => (
        <Tool key={n} label={`Report ${n}`}><ReportIcon /></Tool>
      ))}
    </Toolbar>
  </ToolbarRow>
);

const Requirements = () => (
  <RequirementsPane>
    <ScrollClip>
      <ReqTable>
        <colgroup>
          <col style={{ width: 270 }} />
          <col style={{ width: 600 }} />
          <col style={{ width: 100 }} />
          <col style={{ width: 100 }} />
          <col style={{ width: 100 }} />
        </colgroup>
        <thead>
          <tr>
            <ReqTh>Name</ReqTh>
            <ReqTh>Coverage</ReqTh>
            <ReqTh $right>Pass</ReqTh>
            <ReqTh $right>Missing</ReqTh>
            <ReqTh $right>Total</ReqTh>
          </tr>
        </thead>
        <tbody>
          <tr>
            <NameCell>
              <NameFlex $root>
                <TreeCheck type="checkbox" defaultChecked />
                <RootIcon />
                <NameText $root>Requirements</NameText>
              </NameFlex>
            </NameCell>
            <CoverageCell>Not yet run (100%)</CoverageCell>
            <NumCell $root>0</NumCell>
            <NumCell $root>0</NumCell>
            <NumCell $root>3261</NumCell>
          </tr>
          {REQS.map(([name, total]) => (
            <tr key={name}>
              <NameCell>
                <NameFlex>
                  <Branch />
                  <TreeCheck type="checkbox" defaultChecked />
                  <NodeIcon />
                  <NameText>{name}</NameText>
                </NameFlex>
              </NameCell>
              <CoverageCell>Not yet run (100%)</CoverageCell>
              <NumCell>0</NumCell>
              <NumCell>0</NumCell>
              <NumCell>{total}</NumCell>
            </tr>
          ))}
        </tbody>
      </ReqTable>
    </ScrollClip>
    <ScrollTrack $w={20}><ScrollThumb $h={136} /></ScrollTrack>
  </RequirementsPane>
);

const Expander = ({ name }: { name: string }) => (
  <ExpandButton type="button" aria-label={`Expand ${name}`}>
    <PlusIcon />
  </ExpandButton>
);

const TestGrid = () => (
  <GridArea>
    <ScrollClip>
      <GridTable>
        <colgroup>
          {GRID_WIDTHS.map((w, i) => (
            <col key={i} style={{ width: w }} />
          ))}
          <col />
        </colgroup>
        <thead>
          <tr>
            <HeadExpand><Expander name="all" /></HeadExpand>
            {["Status", "Test Case name", "Version", "Category", "Verdict", "Che"].map((h) => (
              <GridTh key={h}>{h}</GridTh>
            ))}
            <GridTh><ClipHeadIcon /></GridTh>
            {["Comment", "Date", "Duration", "In", "Out", "user1", "user2"].map((h) => (
              <GridTh key={h}>{h}</GridTh>
            ))}
            <FillerTh />
          </tr>
        </thead>
        <tbody>
          {CASES.map((c) => {
            const tone = c.tone ?? "white";
            const cells = [c.name, c.version, c.cat, "", "", "", "", "", "", "0", "0", "", ""];
            return (
              <tr key={c.name}>
                <ExpandCell>{c.expand && <Expander name={c.name} />}</ExpandCell>
                <Td $tone={tone}>{tone === "sel" && <StatusIcon><PlayGreen /></StatusIcon>}</Td>
                {cells.map((t, i) => (
                  <Td key={i} $tone={tone}>{t}</Td>
                ))}
                <td />
              </tr>
            );
          })}
        </tbody>
      </GridTable>
    </ScrollClip>
    <ScrollTrack $w={29}><ScrollThumb $h={21} /></ScrollTrack>
  </GridArea>
);

const ActionIcon = ({ label, children }: Kids & { label: string }) => (
  <PlainIconButton type="button" aria-label={label}>
    {children}
  </PlainIconButton>
);

const ControlPanels = () => (
  <Controls>
    <Group $w={179}>
      <Legend>Panes</Legend>
      <GroupBody $pad="18px 12px 0 10px">
        <PaneButtons>
          <PushButton type="button" disabled>Edition Mode</PushButton>
          <PushButton type="button">Specification Pane</PushButton>
        </PaneButtons>
      </GroupBody>
    </Group>
    <Center>
      <Group>
        <Legend>Run Tests</Legend>
        <GroupBody $pad="9px 7px 11px 7px">
          <Transport>
            <Cluster $gap={20}>
              <Cluster $gap={13}>
                <ActionIcon label="Run"><KeyIcon kind="play" /></ActionIcon>
                <ActionIcon label="Step"><KeyIcon kind="step" /></ActionIcon>
              </Cluster>
              <Drop label="Step options" />
            </Cluster>
            <Cluster $gap={18}>
              <ActionIcon label="Pause run"><KeyIcon kind="pause" /></ActionIcon>
              <ActionIcon label="Stop run"><StopIcon /></ActionIcon>
              <ActionIcon label="Rewind"><KeyIcon kind="back" /></ActionIcon>
            </Cluster>
          </Transport>
          <ProgressRow>
            <Progress>1</Progress>
            <Timer>00:00:05</Timer>
          </ProgressRow>
        </GroupBody>
      </Group>
      <GroupRow>
        <Group $w={236}>
          <Legend>Analyse results</Legend>
          <GroupBody $pad="12px 0 10px 16px">
            <IconStrip>
              <ActionIcon label="Analyse"><AnalyseIcon /></ActionIcon>
              <ActionIcon label="Log"><LogIcon /></ActionIcon>
              <IconGap />
              <ActionIcon label="Report settings"><SettingsDocIcon /></ActionIcon>
              <ActionIcon label="Attachments"><AttachIcon /></ActionIcon>
            </IconStrip>
          </GroupBody>
        </Group>
        <Group $w={314}>
          <Legend>Handle results</Legend>
          <GroupBody $pad="12px 0 10px 16px">
            <IconStrip>
              <ActionIcon label="Copy"><CopyGrayIcon /></ActionIcon>
              <ActionIcon label="Bug report"><ScrollBugIcon /></ActionIcon>
              <ActionIcon label="Edit"><EditDocIcon /></ActionIcon>
              <ActionIcon label="Mail"><EnvelopeGrayIcon /></ActionIcon>
              <ActionIcon label="Print"><PrinterIcon /></ActionIcon>
              <ActionIcon label="Archive"><ArchiveIcon /></ActionIcon>
            </IconStrip>
          </GroupBody>
        </Group>
      </GroupRow>
    </Center>
    <Group $w={484}>
      <ModeLegend>
        <ModeLabel $pad={35}>
          <Radio type="radio" name="mode" defaultChecked />
          Executable Test Cases
        </ModeLabel>
        <ModeRule />
        <ModeLabel $pad={20}>
          <Radio type="radio" name="mode" />
          Main Test Cases
        </ModeLabel>
      </ModeLegend>
      <GroupBody $pad="23px 0 0 0">
        <ChartRow>
          <LegendEntry>
            <Swatch />
            Remaining - 3263 (99.97%)
          </LegendEntry>
          <PieChart />
        </ChartRow>
        <TotalLine>Total count of Applicable Tests in the Tester View: 3264</TotalLine>
      </GroupBody>
    </Group>
  </Controls>
);

export default function App() {
  return (
    <>
      <GlobalStyle />
      <Window>
        <TitleBar>
          <LogoIcon />
          <Title>{"EMVv4x_TTS 2.19.02-S292 (1.00.44-S292)  - KaNest-ICC 7.40.16-S292 - [Testsuite2.td1]"}</Title>
          <CaptionButtons>
            <CaptionButton type="button" aria-label="Minimize">
              <Svg s={12}><path d="M0 6h12" stroke="#8c8c8c" /></Svg>
            </CaptionButton>
            <CaptionButton type="button" aria-label="Restore">
              <Svg s={12}>
                <rect x="0.500" y="3" width="8.500" height="8.500" rx="1" stroke="#8c8c8c" />
                <path d="M3 .5h6q2.500 0 2.500 2.500v6" stroke="#8c8c8c" />
              </Svg>
            </CaptionButton>
            <CaptionButton type="button" aria-label="Close">
              <Svg s={12}><path d="M0 0l12 12M12 0L0 12" stroke="#8c8c8c" /></Svg>
            </CaptionButton>
          </CaptionButtons>
        </TitleBar>
        <MenuBar>
          <DocTIcon />
          <MenuList>
            {MENUS.map((m) => (
              <MenuItem key={m} type="button">{m}</MenuItem>
            ))}
          </MenuList>
          <MdiButton type="button" aria-label="Minimize document">
            <Svg s={9}><path d="M1 7h6" stroke="#93a3b5" strokeWidth="2" /></Svg>
          </MdiButton>
          <MdiButton type="button" aria-label="Restore document">
            <Svg s={9}><path d="M1 4.500h5v3H1zM3.500 3V1.500h5v3H7" stroke="#93a3b5" strokeWidth="1.300" /></Svg>
          </MdiButton>
          <MdiButton type="button" aria-label="Close document">
            <Svg s={9}><path d="M1.500 1.500l6 6m0-6l-6 6" stroke="#93a3b5" strokeWidth="2.200" /></Svg>
          </MdiButton>
        </MenuBar>
        <Toolbars />
        <Workspace>
          <WorkspaceInner>
            <Requirements />
            <TestPane>
              <TestPaneInner>
                <TestGrid />
                <ControlPanels />
              </TestPaneInner>
            </TestPane>
          </WorkspaceInner>
        </Workspace>
        <StatusBar>
          <StatusCell $w={86} $sep>Administrat</StatusCell>
          <StatusCell $w={56}>{" Status"}</StatusCell>
          <StatusCell $w={160} $bg="#fff" $sep>Running</StatusCell>
          <StatusCell $w={3} />
          <StatusCell $w={96} $bg="#fff" $sep />
          <StatusCell $w={48} $center>Chs</StatusCell>
          <StatusCell $w={69} $bg="#ff0" $sep $center>1 ( 1 )</StatusCell>
          <StatusCell $w={55} $center>Com</StatusCell>
          <StatusCell $w={69} $bg="#fff" $sep $center>0 ( 0 )</StatusCell>
          <Lamps>
            <Lamp />
            <Lamp />
          </Lamps>
        </StatusBar>
      </Window>
      <Overlay>
        <Dialog role="dialog" aria-label="KaNest-ICC">
          <DialogTitle>
            KaNest-ICC
            <DialogClose type="button" aria-label="Close dialog">
              <Svg s={13}><path d="M.5 .5l12 12M12.500 .5l-12 12" stroke="#8c8c8c" /></Svg>
            </DialogClose>
          </DialogTitle>
          <DialogText>Probe is ready.</DialogText>
          <DialogActions>
            <AbortButton type="button">Abort the test</AbortButton>
          </DialogActions>
        </Dialog>
      </Overlay>
    </>
  );
}
